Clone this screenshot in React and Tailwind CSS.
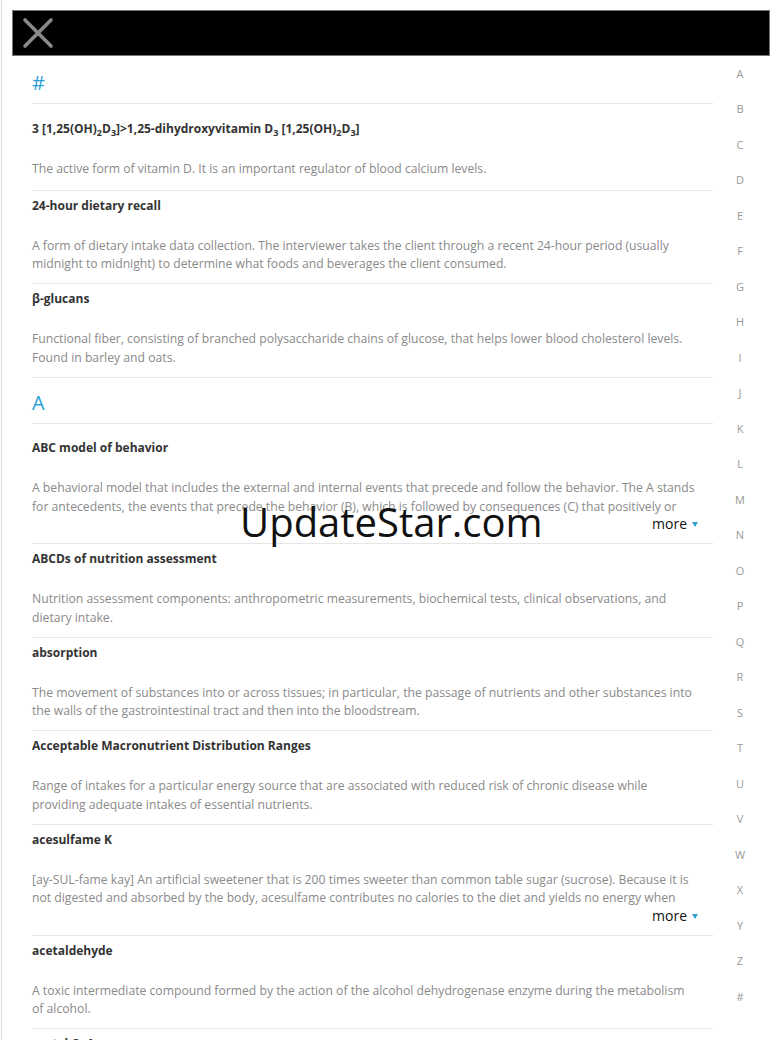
import React from "react";

const letters = ["A","B","C","D","E","F","G","H","I","J","K","L","M","N","O","P","Q","R","S","T","U","V","W","X","Y","Z","#"];

const Sub = ({ children }) => <sub className="text-[9px] align-[-1px]">{children}</sub>;

const sections = [
  {
    head: "#",
    items: [
      {
        term: (
          <>3 [1,25(OH)<Sub>2</Sub>D<Sub>3</Sub>]&gt;1,25-dihydroxyvitamin D<Sub>3</Sub> [1,25(OH)<Sub>2</Sub>D<Sub>3</Sub>]</>
        ),
        def: "The active form of vitamin D. It is an important regulator of blood calcium levels.",
        extra: true,
      },
      {
        term: "24-hour dietary recall",
        def: "A form of dietary intake data collection. The interviewer takes the client through a recent 24-hour period (usually midnight to midnight) to determine what foods and beverages the client consumed.",
      },
      {
        term: "β-glucans",
        def: "Functional fiber, consisting of branched polysaccharide chains of glucose, that helps lower blood cholesterol levels. Found in barley and oats.",
      },
    ],
  },
  {
    head: "A",
    items: [
      {
        term: "ABC model of behavior",
        def: "A behavioral model that includes the external and internal events that precede and follow the behavior. The A stands for antecedents, the events that precede the behavior (B), which is followed by consequences (C) that positively or negatively reinforce the behavior.",
        more: true,
      },
      {
        term: "ABCDs of nutrition assessment",
        def: "Nutrition assessment components: anthropometric measurements, biochemical tests, clinical observations, and dietary intake.",
      },
      {
        term: "absorption",
        def: "The movement of substances into or across tissues; in particular, the passage of nutrients and other substances into the walls of the gastrointestinal tract and then into the bloodstream.",
      },
      {
        term: "Acceptable Macronutrient Distribution Ranges",
        def: "Range of intakes for a particular energy source that are associated with reduced risk of chronic disease while providing adequate intakes of essential nutrients.",
      },
      {
        term: "acesulfame K",
        def: "[ay-SUL-fame kay] An artificial sweetener that is 200 times sweeter than common table sugar (sucrose). Because it is not digested and absorbed by the body, acesulfame contributes no calories to the diet and yields no energy when metabolized.",
        more: true,
      },
      {
        term: "acetaldehyde",
        def: "A toxic intermediate compound formed by the action of the alcohol dehydrogenase enzyme during the metabolism of alcohol.",
      },
      {
        term: "acetyl CoA",
        def: "A key intermediate in the metabolic breakdown of carbohydrates, fats, and proteins.",
      },
    ],
  },
];

function Entry({ item, firstInSection }) {
  return (
    <div className={"border-b border-[#e6e6e6] " + (firstInSection ? "mt-[9.5px]" : "")}>
      <div className="pt-[5px] text-[12px] leading-[19px] font-bold text-[#333]">{item.term}</div>
      <div
        className={
          "mt-[22px] pr-[16px] text-[12.2px] leading-[18.5px] text-[#8a8a8a] " +
          (item.more ? "h-[37px] overflow-hidden" : "")
        }
      >
        {item.def}
      </div>
      {item.more && (
        <div className="flex justify-end items-center pr-[15px] h-[18.5px] -mt-[1.5px] text-[14px] text-[#111]">
          <span>more</span>
          <svg width="6" height="5" viewBox="0 0 6 5" className="ml-[5px] mt-[2px]">
            <path d="M0 0 L6 0 L3 5 Z" fill="#2a9fd6" />
          </svg>
        </div>
      )}
      <div className={item.more ? "h-[10px]" : item.extra ? "h-[11.5px]" : "h-[9.5px]"} />
    </div>
  );
}

export default function App() {
  return (
    <div
      className="relative h-[1040px] bg-white border-l border-[#dcdcdc] ml-px overflow-hidden"
      style={{ fontFamily: '"Open Sans", "Noto Sans", sans-serif' }}
    >
      <div className="mx-[10px] mt-[10px] h-[46px] bg-black border border-[#777] flex items-center pl-[9px]">
        <svg width="32" height="32" viewBox="0 0 32 32">
          <path d="M3 3 L29 29 M29 3 L3 29" stroke="#8a8a8a" strokeWidth="3.6" strokeLinecap="round" />
        </svg>
      </div>
      <div className="flex">
        <div className="ml-[30px] w-[681px] pt-[2px]">
          {sections.map((s, si) => (
            <div key={si}>
              <div className="pt-[12px] pb-[7px] border-b border-[#e6e6e6] text-[20px] leading-[26px] text-[#2a9fd6]">
                {s.head}
              </div>
              {s.items.map((it, i) => (
                <Entry key={i} item={it} firstInSection={i === 0} />
              ))}
            </div>
          ))}
        </div>
        <div className="w-[54px] flex flex-col">
          {letters.map((l) => (
            <div key={l} className="h-[35.5px] flex items-center justify-center text-[11px] text-[#999]">
              {l}
            </div>
          ))}
        </div>
      </div>
      <div className="absolute left-[238px] top-[496px] text-[40px] leading-[52px] text-[#111] pointer-events-none">
        UpdateStar.com
      </div>
    </div>
  );
}
